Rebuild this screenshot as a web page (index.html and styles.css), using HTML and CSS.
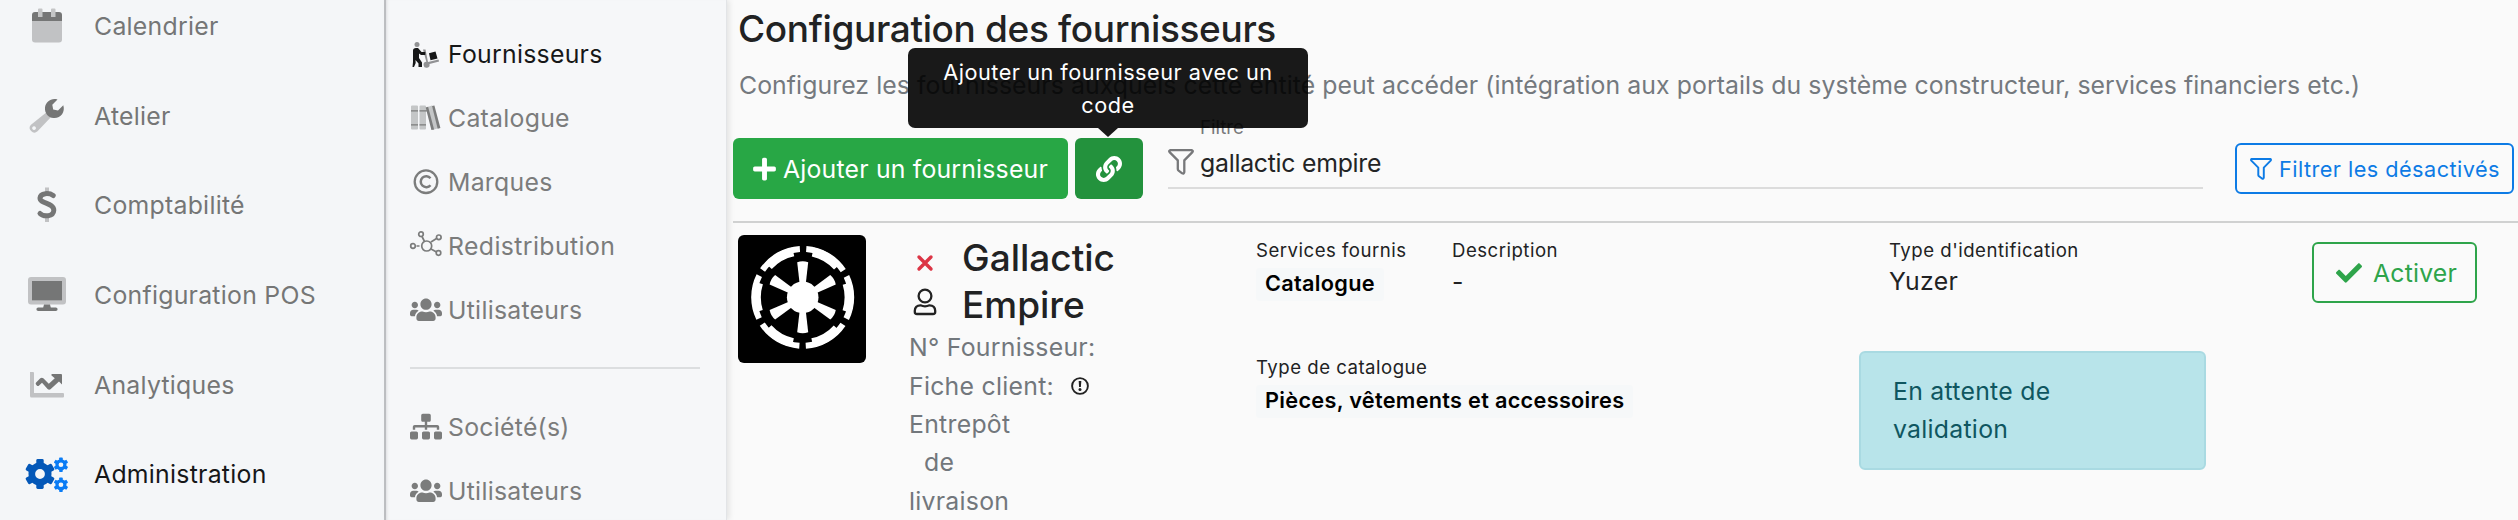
FILE: index.html
```html
<!DOCTYPE html>
<html lang="fr">
<head>
<meta charset="utf-8">
<title>Configuration des fournisseurs</title>
<link rel="stylesheet" href="styles.css">
</head>
<body>
<svg class="defs" width="0" height="0">
  <symbol id="gear" viewBox="-16 -16 32 32">
    <circle r="8.2" fill="none" stroke="currentColor" stroke-width="6.6"/>
    <g fill="currentColor">
      <rect x="-3.7" y="-15" width="7.4" height="6" rx="1.4"/>
      <rect x="-3.7" y="-15" width="7.4" height="6" rx="1.4" transform="rotate(60)"/>
      <rect x="-3.7" y="-15" width="7.4" height="6" rx="1.4" transform="rotate(120)"/>
      <rect x="-3.7" y="-15" width="7.4" height="6" rx="1.4" transform="rotate(180)"/>
      <rect x="-3.7" y="-15" width="7.4" height="6" rx="1.4" transform="rotate(240)"/>
      <rect x="-3.7" y="-15" width="7.4" height="6" rx="1.4" transform="rotate(300)"/>
    </g>
  </symbol>
  <symbol id="users" viewBox="0 0 640 512">
    <path fill="currentColor" d="M96 224c35.3 0 64-28.7 64-64s-28.7-64-64-64-64 28.7-64 64 28.7 64 64 64zm448 0c35.3 0 64-28.7 64-64s-28.7-64-64-64-64 28.7-64 64 28.7 64 64 64zm32 32h-64c-17.6 0-33.5 7.1-45.1 18.6 40.3 22.1 68.9 62 75.1 109.4h66c17.7 0 32-14.3 32-32v-32c0-35.3-28.7-64-64-64zm-256 0c61.9 0 112-50.1 112-112S381.9 32 320 32 208 82.1 208 144s50.1 112 112 112zm76.8 32h-8.3c-20.8 10-43.9 16-68.5 16s-47.6-6-68.5-16h-8.3C179.6 288 128 339.6 128 403.2V432c0 26.5 21.5 48 48 48h288c26.5 0 48-21.5 48-48v-28.8c0-63.6-51.6-115.2-115.2-115.2zm-223.7-13.4C161.5 263.1 145.6 256 128 256H64c-35.3 0-64 28.7-64 64v32c0 17.7 14.3 32 32 32h65.9c6.3-47.4 34.9-87.3 75.2-109.4z"/>
  </symbol>
  <symbol id="funnel" viewBox="0 0 26 26">
    <path fill="none" stroke="currentColor" stroke-width="2.3" stroke-linejoin="round" d="M2 1.2H24Q25.4 1.8 24.4 3.1L16.3 11.4V23.2Q16 25.2 14.2 24.3L10.6 21.6Q9.8 21 9.8 20V11.4L1.6 3.1Q.6 1.8 2 1.2Z"/>
  </symbol>
</svg>

<nav class="primary">
  <a class="item"><svg class="icon" viewBox="0 0 44 44"><path class="soft" d="M7 17H37V35.5a3 3 0 0 1-3 3H10a3 3 0 0 1-3-3Z"/><path d="M10 8H34a3 3 0 0 1 3 3V17H7V11a3 3 0 0 1 3-3Z"/><path class="pale" d="M13 5.5q0-1 1-1h2.500q1 0 1 1V13h-4.500ZM26 5.500q0-1 1-1h2.500q1 0 1 1V13H26Z"/></svg><span>Calendrier</span></a>
  <a class="item"><svg class="icon" viewBox="0 0 44 44"><path class="soft" fill-rule="evenodd" d="M22.500 17.500 27 22 12.500 37.200a4.600 4.600 0 0 1-6.500-6.500ZM9 32.200a1.900 1.900 0 1 0 .1 0Z"/><path d="M32.500 5.400 27.300 10.700 28.200 15.500 33 16.400 38.300 11.200C40.500 18.200 35.500 24.600 28.500 24 23 23.500 19.500 19 20 13.500 20.600 7.500 26.500 3.500 32.500 5.400Z"/></svg><span>Atelier</span></a>
  <a class="item"><svg class="icon" viewBox="0 0 44 44"><path class="soft" d="M20 4.500h4V10h-4ZM20 34h4v5h-4Z"/><path fill="none" stroke="currentColor" stroke-width="5" stroke-linecap="round" d="M28.200 12.500C24.500 9.800 15.500 9.500 15 15c-.3 5.800 14 4.500 13.800 12.200C28.500 34 18.500 34 15 30.500"/></svg><span>Comptabilité</span></a>
  <a class="item"><svg class="icon" viewBox="0 0 44 44"><path class="soft" fill-rule="evenodd" d="M6 4H38a3 3 0 0 1 3 3V28.500a3 3 0 0 1-3 3H6a3 3 0 0 1-3-3V7a3 3 0 0 1 3-3ZM7 8V27.500H37V8Z"/><path d="M7 8H37V27.500H7ZM19 31.500h6l.8 3h5a1.800 1.800 0 0 1 0 3.600h-17.600a1.800 1.800 0 0 1 0-3.600h5Z"/></svg><span>Configuration POS</span></a>
  <a class="item"><svg class="icon" viewBox="0 0 44 44"><path class="soft" d="M5 9h3q1 0 1 1V30H38q1 0 1 1v2.500q0 1-1 1H6.500Q5 34.500 5 33Z"/><path d="M27 11H36q1 0 1 1v9.500l-3-3L25.500 26.200q-1.500 1-2.900-.3L17 19.800l-2.900 2.800q-1.200 1-2.300 0l-.8-1q-.8-1 .1-2l4.200-4.300q1.500-1.200 3 0l5.500 5.500 6-5.500L26.500 12.500Q26 11.200 27 11Z"/></svg><span>Analytiques</span></a>
  <a class="item active"><svg class="icon" viewBox="0 0 44 44"><g color="#0458b8"><use href="#gear" x="-1" y="6" width="32" height="32"/></g><g color="#0a7cf5"><use href="#gear" x="28.200" y="5" width="15.500" height="15.500"/><use href="#gear" x="28.200" y="25" width="15.500" height="15.500"/></g></svg><span>Administration</span></a>
</nav>

<nav class="secondary">
  <a class="sub active"><svg class="sicon" viewBox="0 0 32 32"><circle class="half" cx="7" cy="6.500" r="2.500"/><path d="M3 12.500Q3 10 6 10H8l3.500 4h3.800v3H11L9 15.500V20l3 4.500V29H8.500V25.500L5.500 22 5.700 25 4 29H2.500L3 24ZM19 15.200 25.500 13.500 27.500 20.500 20.500 22.300Z"/><path class="half" d="M13 11.500h2.500L18 24l10.500-2.500.6 2-9.600 2.600a3 3 0 1 1-3.200-2.300Z"/></svg><span>Fournisseurs</span></a>
  <a class="sub"><svg class="sicon" viewBox="0 0 32 32"><path class="soft" d="M2 3.500h5q1 0 1 1v22q0 1-1 1H2q-1 0-1-1v-22q0-1 1-1ZM10.500 3.500H15q1 0 1 1v22q0 1-1 1h-4.500q-1 0-1-1v-22q0-1 1-1ZM16 5.500 22 3.500 29 26 22.500 28Z"/><path d="M1 8.200h7v1.200H1ZM9.500 8.200H17v1.200H9.500ZM1 22.200h7v1.200H1ZM9.500 22.200H16v1.200H9.500ZM15.700 5.400l2.400-.7 6 22.700-2.700.6ZM22 4l2.400-.6 6 22.700-2.700.7Z"/></svg><span>Catalogue</span></a>
  <a class="sub"><svg class="sicon" viewBox="0 0 32 32"><circle cx="16" cy="15.700" r="11.300" fill="none" stroke="currentColor" stroke-width="2.300"/><path fill="none" stroke="currentColor" stroke-width="2.500" d="M20.500 12.200a5.500 5.500 0 1 0 0 7"/></svg><span>Marques</span></a>
  <a class="sub"><svg class="sicon" viewBox="0 0 32 32"><g fill="none" stroke="currentColor" stroke-width="1.700"><circle cx="16.700" cy="16" r="5"/><circle cx="11" cy="4.200" r="2.300"/><circle cx="28.800" cy="7.300" r="2.300"/><circle cx="3" cy="16" r="2.300"/><circle cx="28.500" cy="23" r="2.300"/><path d="M12 6.500 14.500 11.500M21 12l5.500-3.500M6.500 16h3M21 19l5.500 3"/></g></svg><span class="loose">Redistribution</span></a>
  <a class="sub"><svg class="sicon"><use href="#users" y="3" width="32" height="25.600"/></svg><span>Utilisateurs</span></a>
  <div class="rule"></div>
  <a class="sub"><svg class="sicon" viewBox="0 0 640 640"><path transform="translate(0 56)" d="M128 352H32c-17.670 0-32 14.330-32 32v96c0 17.670 14.330 32 32 32h96c17.670 0 32-14.330 32-32v-96c0-17.670-14.330-32-32-32zm-24-80h192v48h48v-48h192v48h48v-57.590c0-21.170-17.230-38.410-38.410-38.410H344v-64h40c17.670 0 32-14.330 32-32V32c0-17.670-14.330-32-32-32H256c-17.670 0-32 14.330-32 32v96c0 17.670 14.330 32 32 32h40v64H94.410C73.230 224 56 241.230 56 262.410V320h48v-48zm264 80h-96c-17.670 0-32 14.330-32 32v96c0 17.670 14.330 32 32 32h96c17.670 0 32-14.330 32-32v-96c0-17.670-14.330-32-32-32zm240 0h-96c-17.670 0-32 14.330-32 32v96c0 17.670 14.330 32 32 32h96c17.670 0 32-14.330 32-32v-96c0-17.670-14.330-32-32-32z"/></svg><span>Société(s)</span></a>
  <a class="sub"><svg class="sicon"><use href="#users" y="3" width="32" height="25.600"/></svg><span>Utilisateurs</span></a>
</nav>

<main>
  <h1>Configuration des fournisseurs</h1>
  <p class="lead">Configurez les fournisseurs auxquels cette entité peut accéder (intégration aux portails du système constructeur, services financiers etc.)</p>

  <div class="toolbar">
    <button class="btn add"><svg width="23" height="26" viewBox="0 0 448 512"><path d="M416 208H272V64c0-17.670-14.330-32-32-32h-32c-17.670 0-32 14.330-32 32v144H32c-17.670 0-32 14.330-32 32v32c0 17.670 14.330 32 32 32h144v144c0 17.670 14.330 32 32 32h32c17.670 0 32-14.330 32-32V304h144c17.670 0 32-14.330 32-32v-32c0-17.670-14.330-32-32-32z"/></svg><span>Ajouter un fournisseur</span></button>
    <button class="btn link"><svg width="26" height="26" viewBox="0 0 512 512"><path d="M326.612 185.391c59.747 59.809 58.927 155.698.36 214.590-.110.120-.240.250-.360.370l-67.200 67.200c-59.270 59.270-155.699 59.262-214.960 0-59.270-59.260-59.270-155.700 0-214.960l37.106-37.106c9.840-9.840 26.786-3.300 27.294 10.606.648 17.722 3.826 35.527 9.690 52.721 1.986 5.822.567 12.262-3.783 16.612l-13.087 13.087c-28.026 28.026-28.905 73.660-1.155 101.960 28.024 28.579 74.086 28.749 102.325.510l67.200-67.190c28.191-28.191 28.073-73.757 0-101.830-3.701-3.694-7.429-6.564-10.341-8.569a16.037 16.037 0 0 1-6.947-12.606c-.396-10.567 3.348-21.456 11.698-29.806l21.054-21.055c5.521-5.521 14.182-6.199 20.584-1.731a152.482 152.482 0 0 1 20.522 17.197zM467.547 44.449c-59.261-59.262-155.690-59.270-214.960 0l-67.200 67.200c-.120.120-.250.250-.360.370-58.566 58.892-59.387 154.781.360 214.590a152.454 152.454 0 0 0 20.521 17.196c6.402 4.468 15.064 3.789 20.584-1.731l21.054-21.055c8.350-8.350 12.094-19.239 11.698-29.806a16.037 16.037 0 0 0-6.947-12.606c-2.912-2.005-6.640-4.875-10.341-8.569-28.073-28.073-28.191-73.639 0-101.830l67.200-67.190c28.239-28.239 74.300-28.069 102.325.510 27.750 28.300 26.872 73.934-1.155 101.960l-13.087 13.087c-4.350 4.350-5.769 10.790-3.783 16.612 5.864 17.194 9.042 34.999 9.690 52.721.509 13.906 17.454 20.446 27.294 10.606l37.106-37.106c59.271-59.259 59.271-155.699.001-214.959z"/></svg>
      <span class="tooltip">Ajouter un fournisseur avec un<br>code</span>
    </button>
    <div class="filter">
      <svg width="26" height="26"><use href="#funnel"/></svg>
      <div class="field"><label>Filtre</label><span class="value">gallactic empire</span></div>
    </div>
    <button class="toggle"><svg width="22" height="22"><use href="#funnel"/></svg><span>Filtrer les désactivés</span></button>
  </div>

  <section class="supplier">
    <svg class="logo" viewBox="0 0 128 128">
      <rect width="128" height="128" fill="#000"/>
      <g transform="translate(64.700 62.300)">
        <circle r="48.500" fill="none" stroke="#fff" stroke-width="6" stroke-dasharray="44.300 6.490" stroke-dashoffset="22.150"/>
        <circle r="46.400" fill="none" stroke="#fff" stroke-width="9" stroke-dasharray="29 19.590" stroke-dashoffset="14.500"/>
        <circle r="15.800" fill="#fff"/>
        <g fill="#fff">
          <path id="spoke" d="M-3-13-5.500-35Q0-37 5.500-35L3-13Z"/>
          <use href="#spoke" transform="rotate(60)"/><use href="#spoke" transform="rotate(120)"/><use href="#spoke" transform="rotate(180)"/><use href="#spoke" transform="rotate(240)"/><use href="#spoke" transform="rotate(300)"/>
        </g>
      </g>
    </svg>

    <div class="identity">
      <div class="name">
        <div class="flags">
          <svg width="16" height="16" viewBox="0 0 16 16"><path d="M2 2 14 14M14 2 2 14" stroke="#dc3545" stroke-width="3.400" stroke-linecap="round"/></svg>
          <svg width="24" height="28" viewBox="0 0 24 28"><g fill="none" stroke="#222" stroke-width="2.300"><circle cx="12" cy="8" r="6.400"/><path d="M7.500 17.300Q12 19.400 16.500 17.300 22 17.300 22.200 22.800V24Q22.200 26 20 26H4Q1.800 26 1.800 24V22.800Q2 17.300 7.500 17.300Z"/></g></svg>
        </div>
        <h2>Gallactic<br>Empire</h2>
      </div>
      <div class="meta">N° Fournisseur:</div>
      <div class="meta">Fiche client:<svg width="18" height="18" viewBox="0 0 18 18"><circle cx="9" cy="9" r="7.900" fill="none" stroke="#222" stroke-width="1.900"/><path d="M7.700 4h2.600l-.4 6H8.100Z" fill="#222"/><circle cx="9" cy="12.600" r="1.500" fill="#222"/></svg></div>
      <div class="meta">Entrepôt</div>
      <div class="meta indent">de</div>
      <div class="meta">livraison</div>
    </div>

    <div class="services">
      <div class="pair">
        <div class="cell"><div class="label">Services fournis</div><span class="badge">Catalogue</span></div>
        <div class="cell"><div class="label">Description</div><div class="dash">-</div></div>
      </div>
      <div class="cell"><div class="label">Type de catalogue</div><span class="badge">Pièces, vêtements et accessoires</span></div>
    </div>

    <div class="auth">
      <div class="ident"><div class="label">Type d'identification</div><div class="kind">Yuzer</div></div>
      <div class="alert">En attente de<br>validation</div>
    </div>

    <button class="activate"><svg width="26" height="26" viewBox="0 0 512 512"><path d="M173.898 439.404l-166.400-166.400c-9.997-9.997-9.997-26.206 0-36.204l36.203-36.204c9.997-9.998 26.207-9.998 36.204 0L192 312.690 432.095 72.596c9.997-9.997 26.207-9.997 36.204 0l36.203 36.204c9.997 9.997 9.997 26.206 0 36.204l-294.400 294.401c-9.998 9.997-26.207 9.997-36.204-.001z"/></svg><span>Activer</span></button>
  </section>
</main>
</body>
</html>
```

FILE: styles.css
```css
* { box-sizing: border-box; }

body {
  margin: 0;
  width: 2518px;
  height: 520px;
  overflow: hidden;
  display: flex;
  background: #fafafa;
  color: #212223;
  font-family: Inter, "Liberation Sans", sans-serif;
  font-size: 24.8px;
  line-height: 38px;
  letter-spacing: .27px;
  white-space: nowrap;
}

h1, h2, p { margin: 0; }
svg { display: block; flex: none; fill: currentColor; overflow: visible; }
button { border: 0; padding: 0; font: inherit; letter-spacing: .2px; background: none; }
.defs { position: absolute; }
.soft { opacity: .4; }
.half { opacity: .45; }
.pale { fill: #c4c5c6; }

/* Primary navigation */
.primary {
  width: 386px;
  flex: none;
  margin-top: -18.5px;
  height: 540px;
  background: #f4f6f8;
  border-right: 2px solid #bfc1c4;
}
.item {
  display: flex;
  align-items: center;
  gap: 25px;
  height: 89.6px;
  padding-left: 25px;
  color: #757676;
}
.icon { width: 44px; height: 44px; }
.active { color: #161718; }

/* Secondary navigation */
.secondary {
  width: 341px;
  flex: none;
  padding: 22px 0 0 24px;
  background: #f6f7f9;
  border-right: 1px solid #e2e4e7;
  box-shadow: inset 3px 0 3px -2px #dcdee0, 2px 0 6px rgba(0, 0, 0, .1);
}
.sub {
  display: flex;
  align-items: center;
  gap: 6px;
  height: 64px;
  color: #7b7c7c;
}
.sub.active { color: #161718; }
.loose { letter-spacing: .4px; }
.sicon { width: 32px; height: 32px; }
.rule { width: 290px; height: 2px; margin: 25px 0 26px; background: #dcdee0; }

/* Page header */
main { flex: 1; padding: 6px 0 0 6px; }
h1 { padding-left: 5px; font-size: 37px; line-height: 46px; font-weight: 500; letter-spacing: -.35px; }
.lead { margin-top: 14px; padding-left: 6px; color: #74797e; letter-spacing: .07px; }

.toolbar {
  display: flex;
  height: 83px;
  margin-top: 34px;
}
.btn {
  display: flex;
  align-items: center;
  height: 61px;
  border-radius: 6px;
  color: #fff;
  background: #28a745;
}
.add { width: 335px; padding-left: 20px; gap: 7px; }
.link {
  position: relative;
  width: 68px;
  margin-left: 7px;
  justify-content: center;
  background: #23923d;
}
.tooltip {
  position: absolute;
  z-index: 2;
  left: -167px;
  top: -90px;
  width: 400px;
  height: 80px;
  padding: 8px 0;
  border-radius: 7px;
  background: rgba(0, 0, 0, .9);
  font-size: 21.7px;
  line-height: 33.2px;
  letter-spacing: .5px;
  text-align: center;
}
.tooltip::after {
  content: "";
  position: absolute;
  left: 190px;
  top: 80px;
  border: 10px solid transparent;
  border-top: 9px solid #191919;
  border-bottom: 0;
}
.filter {
  display: flex;
  gap: 6px;
  width: 1035px;
  height: 51px;
  margin-left: 25px;
  padding-top: 11px;
  border-bottom: 2px solid #dcdcdc;
  color: #77787a;
}
.field { display: flex; flex-direction: column; margin-top: -32px; }
.field label { font-size: 18.6px; line-height: 20px; letter-spacing: 0; }
.value { margin-top: 7px; color: #232425; letter-spacing: -.25px; }
.toggle {
  display: flex;
  align-items: center;
  gap: 7px;
  width: 279px;
  height: 51px;
  margin: 5px 0 0 32px;
  padding-left: 13px;
  border: 2px solid #0d7be5;
  border-radius: 6px;
  color: #0d7be5;
  font-size: 21.7px;
  letter-spacing: .45px;
}

/* Supplier row */
.supplier {
  display: flex;
  align-items: flex-start;
  border-top: 2px solid #d0d1d1;
}
.logo { width: 128px; height: 128px; margin: 12px 0 0 5px; border-radius: 6px; overflow: hidden; }
.identity { width: 346px; margin: 12px 0 0 43px; }
.name { display: flex; gap: 25px; }
.flags { display: flex; flex-direction: column; align-items: center; width: 24px; margin-left: 4px; padding-top: 19.5px; gap: 17px; }
h2 { font-size: 37px; line-height: 46.5px; font-weight: 500; letter-spacing: 0; }
.meta { display: flex; align-items: center; height: 38.4px; color: #72777c; }
.meta svg { margin-left: 17px; }
.indent { padding-left: 15px; }

.services { width: 603px; margin-left: 1px; padding-top: 14px; }
.pair { display: flex; height: 117px; }
.pair .cell:first-child { width: 196px; }
.label { font-size: 18.6px; line-height: 26px; letter-spacing: .5px; }
.badge {
  display: inline-block;
  height: 33px;
  margin-top: 4px;
  padding: 0 9px;
  border-radius: 4px;
  background: #f6f8f9;
  color: #000;
  font-size: 21.7px;
  line-height: 31px;
  font-weight: 600;
  letter-spacing: .3px;
}
.dash { line-height: 30px; margin-top: 4px; }
.auth { width: 347px; padding-top: 14px; }
.ident { padding-left: 30px; height: 114px; }
.kind { margin-top: -1px; }
.alert {
  height: 119px;
  padding: 19px 0 0 32px;
  border: 2px solid #a9dae2;
  border-radius: 6px;
  background: #b8e4ea;
  color: #0f5660;
  line-height: 38.4px;
}
.activate {
  display: flex;
  align-items: center;
  gap: 11px;
  width: 165px;
  height: 61px;
  margin: 19px 0 0 106px;
  padding-left: 22px;
  border: 2px solid #2ea44a;
  border-radius: 6px;
  color: #2ea44a;
}
```
